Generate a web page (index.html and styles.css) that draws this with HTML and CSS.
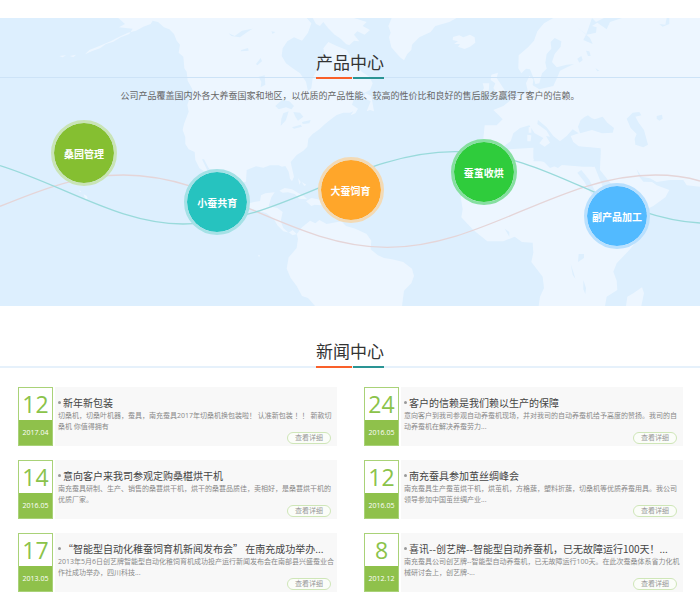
FILE: index.html
```
<!DOCTYPE html>
<html lang="zh-CN">
<head>
<meta charset="utf-8">
<meta name="viewport" content="width=device-width, initial-scale=1">
<title>产品中心</title>
<link rel="stylesheet" href="styles.css">
</head>
<body>
<section class="products">
  <svg class="map" viewBox="0 54 2100 864" preserveAspectRatio="none" aria-hidden="true">
    <g class="land">
      <!-- North and Central America -->
      <path d="M355 54L375 72L357 82L398 86L388 102L362 112L340 125L318 132L300 145L275 154L255 163L268 150L300 137L332 124L358 110L384 98L408 92L430 80L452 72L458 62L474 66L492 82L508 88L522 102L530 122L540 134L536 158L550 170L553 205L560 215L563 242L574 262L584 284L570 290L562 315L566 335L552 372L548 390L556 412L556 432L566 448L584 456L586 480L598 504L610 512L618 530L630 534L624 515L606 478L612 478L626 504L644 526L690 570L720 600L750 609L762 606L780 603L783 586L796 580L824 577L814 592L806 618L832 624L848 636L842 664L850 684L866 698L878 690L890 702L878 706L868 698L850 694L832 676L822 658L800 640L750 625L700 620L665 560L738 545L740 510L768 499L790 503L810 496L836 496L846 500L856 498L866 515L870 536L876 544L882 530L876 505L872 486L890 465L910 452L922 440L925 416L938 402L958 388L975 372L990 360L1010 345L1030 338L1050 338L1060 334L1052 346L1066 340L1074 326L1056 314L1062 296L1040 300L1060 282L1086 282L1110 270L1118 250L1108 230L1085 215L1068 190L1054 175L1040 150L1010 138L985 126L970 145L975 168L958 188L948 215L938 235L934 265L924 274L918 245L900 220L878 205L858 190L845 168L848 145L862 124L882 112L906 122L924 98L934 70L920 54Z"/>
      <path d="M938 54L948 72L960 78L970 66L984 84L1004 104L1022 116L1038 132L1048 136L1062 122L1078 124L1062 104L1072 94L1094 104L1110 90L1088 78L1100 66L1062 54Z"/>
      <path d="M1100 334L1112 304L1092 294L1096 280L1114 288L1122 334L1110 330Z"/>
      <path d="M178 168l20 -2l-10 6zM210 168l18 -4l-8 8zM251 583l10 5l2 8l-7 3zM236 571l8 3l-4 3zM774 764l6 2l-3 6z"/>
      <!-- Greenland, Iceland and the Caribbean -->
      <path d="M1175 54L1165 78L1172 98L1167 112L1174 142L1186 156L1200 172L1212 181L1222 162L1234 150L1236 134L1258 112L1292 96L1306 78L1348 66L1370 54Z"/>
      <path d="M1359 111L1378 106L1390 112L1410 104L1424 112L1426 128L1410 140L1394 147L1374 140L1380 132L1362 132L1374 124L1358 120Z"/>
      <path d="M838 572L854 564L876 568L896 580L914 590L922 598L898 596L884 582L864 577L848 578ZM918 604L934 594L954 598L978 610L960 616L944 614L934 618ZM894 534l8 12l-4 8zM905 546l14 8l-6 4z"/>
      <!-- South America -->
      <path d="M890 702L906 682L930 662L946 670L958 660L980 672L1024 664L1038 678L1066 686L1100 702L1114 722L1112 748L1134 766L1152 774L1176 778L1210 786L1236 806L1242 828L1234 850L1212 872L1206 918L945 918L924 894L906 888L890 858L872 834L860 806L866 772L890 744L894 716Z"/>
      <!-- Europe and Asia -->
      <path d="M2100 54L2100 560L2060 556L2050 540L2010 540L1970 546L1950 535L1925 530L1910 508L1918 530L1930 545L1956 546L1970 556L2008 570L1996 592L1960 618L1930 632L1905 640L1870 600L1840 560L1800 510L1802 450L1780 444L1738 440L1720 426L1712 408L1736 400L1718 388L1700 408L1680 424L1660 408L1640 382L1614 360L1612 372L1640 392L1650 410L1638 408L1650 428L1634 440L1618 430L1630 414L1604 400L1588 376L1560 384L1540 400L1532 424L1512 438L1490 450L1460 440L1450 416L1454 376L1490 376L1508 358L1495 344L1480 330L1510 318L1530 302L1560 284L1584 276L1578 250L1588 228L1600 238L1598 256L1618 268L1660 258L1672 232L1680 212L1704 200L1722 192L1700 194L1670 202L1656 186L1664 162L1682 140L1684 124L1664 114L1652 126L1654 146L1640 162L1636 188L1640 206L1626 220L1618 250L1606 252L1602 238L1590 208L1578 206L1564 220L1555 205L1556 166L1584 142L1602 122L1612 94L1632 70L1660 54Z"/>
      <path d="M1474 224L1494 218L1490 234L1502 252L1516 274L1512 286L1478 294L1490 278L1480 264L1486 250L1472 240ZM1448 250L1468 250L1466 274L1444 280L1452 264Z"/>
      <!-- Africa and Madagascar -->
      <path d="M1476 462L1500 458L1528 448L1600 443L1604 468L1600 484L1630 484L1650 504L1676 494L1750 500L1784 500L1800 540L1820 590L1860 652L1900 652L1940 664L1920 710L1890 748L1850 790L1840 815L1850 842L1852 870L1820 890L1815 918L1616 918L1620 890L1632 864L1628 830L1594 786L1600 758L1598 728L1566 726L1544 710L1510 724L1462 724L1420 690L1384 652L1388 628L1382 590L1400 560L1434 500ZM1926 862L1932 880L1924 918L1878 918L1882 890L1900 880Z"/>
    </g>
    <g class="water">
      <path d="M686 100L704 108L726 92L758 86L742 96L720 112L694 108ZM814 94L826 96L818 102ZM724 150L744 144L746 152L722 154ZM768 192L782 174L786 184L772 196ZM776 230L794 226L796 254L782 262L784 246Z"/>
      <path d="M826 318L846 300L868 304L882 318L874 328L858 322L836 328ZM850 340L866 334L858 360L842 378L844 356ZM880 336L900 338L910 350L894 362L886 350ZM876 382L902 374L906 380L882 386ZM906 366L932 360L928 370L908 372Z"/>
      <path d="M1755 350L1764 346L1774 354L1784 358L1808 350L1822 368L1842 384L1838 398L1806 400L1776 390L1740 400L1734 380L1742 360Z"/>
      <path d="M1880 356L1898 338L1918 336L1924 346L1906 350L1916 368L1932 390L1944 434L1930 442L1906 434L1904 416L1910 402L1892 384Z"/>
      <path d="M1970 348l16 -4l2 12l-10 6l-8 -6zM1732 176l12 -8l4 12l-10 8zM1758 152l10 2l4 14l-8 0zM1786 204l12 8l-6 2zM2000 54l8 0l0 18l-20 8l-10 -8l18 2z"/>
      <path d="M1730 80L1760 104L1788 98L1790 82L1776 78L1792 68L1820 88L1830 66L1866 54L1812 54L1788 66L1776 54L1760 100L1750 120L1778 132L1770 114Z"/>
      <path d="M1600 450L1610 440L1650 444L1700 436L1802 445L1800 486L1780 500L1740 490L1700 484L1674 504L1640 488L1600 476ZM1732 518L1744 510L1768 540L1800 602L1784 600L1752 544Z"/>
      <path d="M1736 762l16 0l0 12l-18 12zM1712 792l10 30l4 14l-8 -12zM1750 840l8 24l-2 18l-6 -14zM1514 686l14 10l0 14z"/>
    </g>
    <g class="land">
      <path d="M1586 382l8 -2l0 18l-8 0zM1582 404l12 2l-2 18l-10 0z"/>
    </g>
    <path class="wave wave-red" d="M0 619C140 562 240 525 370 525C656 525 876 742 1162 742C1448 742 1680 525 1966 525Q2040 525 2100 543"/>
    <path class="wave wave-teal" d="M0 497C200 560 360 672 549 672C846 672 1068 455 1365 455C1640 455 1840 655 2100 669"/>
  </svg>
  <header class="heading">
    <h2>产品中心</h2>
  </header>
  <p class="intro">公司产品覆盖国内外各大养蚕国家和地区，以优质的产品性能、较高的性价比和良好的售后服务赢得了客户的信赖。</p>
  <nav class="stages" aria-label="产品中心">
    <a class="stage stage-garden" href="#">桑园管理</a>
    <a class="stage stage-young" href="#">小蚕共育</a>
    <a class="stage stage-grown" href="#">大蚕饲育</a>
    <a class="stage stage-cocoon" href="#">蚕茧收烘</a>
    <a class="stage stage-byproduct" href="#">副产品加工</a>
  </nav>
</section>

<section class="news">
  <header class="heading">
    <h2>新闻中心</h2>
  </header>
  <div class="news-list">
    <article class="item">
      <time class="date" datetime="2017-04-12"><span class="day">12</span><span class="month">2017.04</span></time>
      <div class="body">
        <h3>新年新包装</h3>
        <p>切桑机，切桑叶机器，蚕具，南充蚕具2017年切桑机换包装啦！ 认准新包装 ！！ 新款切桑机 你值得拥有</p>
        <a class="more" href="#">查看详细</a>
      </div>
    </article>
    <article class="item">
      <time class="date" datetime="2016-05-24"><span class="day">24</span><span class="month">2016.05</span></time>
      <div class="body">
        <h3>客户的信赖是我们赖以生产的保障</h3>
        <p>意向客户到我司参观自动养蚕机现场，并对我司的自动养蚕机给予高度的赞扬。我司的自动养蚕机在解决养蚕劳力...</p>
        <a class="more" href="#">查看详细</a>
      </div>
    </article>
    <article class="item">
      <time class="date" datetime="2016-05-14"><span class="day">14</span><span class="month">2016.05</span></time>
      <div class="body">
        <h3>意向客户来我司参观定购桑椹烘干机</h3>
        <p>南充蚕具研制、生产、销售的桑葚烘干机，烘干的桑葚品质佳，卖相好，是桑葚烘干机的优质厂家。</p>
        <a class="more" href="#">查看详细</a>
      </div>
    </article>
    <article class="item">
      <time class="date" datetime="2016-05-12"><span class="day">12</span><span class="month">2016.05</span></time>
      <div class="body">
        <h3>南充蚕具参加茧丝绸峰会</h3>
        <p>南充蚕具生产蚕茧烘干机，烘茧机，方格蔟，塑料折蔟，切桑机等优质养蚕用具。我公司领导参加中国茧丝绸产业...</p>
        <a class="more" href="#">查看详细</a>
      </div>
    </article>
    <article class="item">
      <time class="date" datetime="2013-05-17"><span class="day">17</span><span class="month">2013.05</span></time>
      <div class="body">
        <h3>“智能型自动化稚蚕饲育机新闻发布会” 在南充成功举办...</h3>
        <p>2013年5月6日创艺牌智能型自动化稚饲育机成功投产运行新闻发布会在南部县兴盛蚕业合作社成功举办，四川科技...</p>
        <a class="more" href="#">查看详细</a>
      </div>
    </article>
    <article class="item">
      <time class="date" datetime="2012-12-08"><span class="day">8</span><span class="month">2012.12</span></time>
      <div class="body">
        <h3>喜讯--创艺牌--智能型自动养蚕机，已无故障运行100天！...</h3>
        <p>南充蚕具公司创艺牌--智能型自动养蚕机，已无故障运行100天。在此次蚕桑体系省力化机械研讨会上，创艺牌-...</p>
        <a class="more" href="#">查看详细</a>
      </div>
    </article>
  </div>
</section>
</body>
</html>
```
FILE: styles.css
```
* {
  box-sizing: border-box;
}

body {
  margin: 0;
  padding-top: 18px;
  background: #fff;
  color: #444;
  font-family: "Open Sans", "Noto Sans CJK SC", sans-serif;
}

h2,
h3,
p {
  margin: 0;
  font-weight: 400;
}

a {
  text-decoration: none;
}

/* Section heading: a full-width rule with a two-colour bar under the title */
.heading {
  display: flex;
  justify-content: center;
  background: linear-gradient(#cde3f7, #cde3f7) 0 calc(100% - 1px) / 100% 1px no-repeat;
}

.heading h2 {
  padding-bottom: 3px;
  background:
    linear-gradient(90deg, #f9602a 36px, transparent 36px 37px, #2a9494 37px)
    0 100% / 100% 2px no-repeat;
  color: #333;
  font-size: 17px;
  line-height: 26px;
}

/* Products */
.products {
  position: relative;
  height: 288px;
  padding-top: 32px;
  background: #ddeffe;
}

.map {
  position: absolute;
  inset: 0;
  width: 100%;
  height: 100%;
}

.land {
  fill: #edf6ff;
}

.water {
  fill: #ddeffe;
}

.wave {
  fill: none;
  stroke-width: 4;
}

.wave-red {
  stroke: #e5d5d8;
}

.wave-teal {
  stroke: #99dadb;
}

.products .heading,
.intro,
.stages {
  position: relative;
}

.intro {
  padding-top: 10px;
  color: #666;
  font-size: 9px;
  line-height: 14px;
  text-align: center;
}

.stages {
  display: flex;
  justify-content: space-between;
  padding: 17px 50px 0 51px;
}

.stage {
  display: flex;
  align-items: center;
  justify-content: center;
  width: 66px;
  height: 66px;
  border: 3px solid;
  border-radius: 50%;
  background-clip: padding-box;
  color: #fff;
  font-size: 10px;
  font-weight: 700;
  white-space: nowrap;
}

.stage-garden {
  border-color: #c9e4b6;
  background-color: #85bf31;
}

.stage-young {
  margin-top: 49px;
  border-color: #a5e1e6;
  background-color: #26c3bf;
}

.stage-grown {
  margin-top: 37px;
  border-color: #f3dab5;
  background-color: #ffa62a;
}

.stage-cocoon {
  margin-top: 19px;
  border-color: #86dfa0;
  background-color: #2fcc3c;
}

.stage-byproduct {
  margin-top: 63px;
  border-color: #b9e0fe;
  background-color: #52baff;
}

/* News */
.news {
  padding: 33px 0 5px;
}

.news .heading {
  background: linear-gradient(#e6f1fb, #e6f1fb) 0 100% / 100% 2px no-repeat;
}

.news-list {
  display: grid;
  grid-template-columns: 1fr 1fr;
  gap: 14px 27px;
  padding: 19px 17px 0 18px;
}

.item {
  display: flex;
  gap: 2px;
  min-width: 0;
  min-height: 59px;
}

.date {
  display: flex;
  flex: none;
  flex-direction: column;
  width: 35px;
  border: 1px solid #a9d278;
  background: #fff;
  text-align: center;
}

.day {
  height: 32px;
  color: #8bc34a;
  font-size: 23px;
  line-height: 32px;
}

.month {
  flex: 1;
  background: #8fc14b;
  color: #fff;
  font-size: 7px;
  line-height: 25px;
}

.body {
  display: flex;
  flex: 1;
  flex-direction: column;
  min-width: 0;
  padding: 8px 0 2px 3px;
  background: #f8f8f8;
}

.body h3 {
  display: flex;
  align-items: center;
  gap: 2px;
  color: #444;
  font-family: "Noto Sans CJK SC", sans-serif;
  font-size: 10px;
  line-height: 15px;
  white-space: nowrap;
}

.body h3::before {
  content: "";
  width: 3px;
  height: 3px;
  border-radius: 50%;
  background: #999;
}

.body p {
  color: #888;
  font-size: 7px;
  line-height: 11px;
}

.more {
  align-self: flex-end;
  width: 44px;
  margin: auto 6px 0 0;
  border: 1px solid #cfe6b8;
  border-radius: 6px;
  background: #fbfdf9;
  color: #999;
  font-size: 7px;
  line-height: 10px;
  text-align: center;
}
```
